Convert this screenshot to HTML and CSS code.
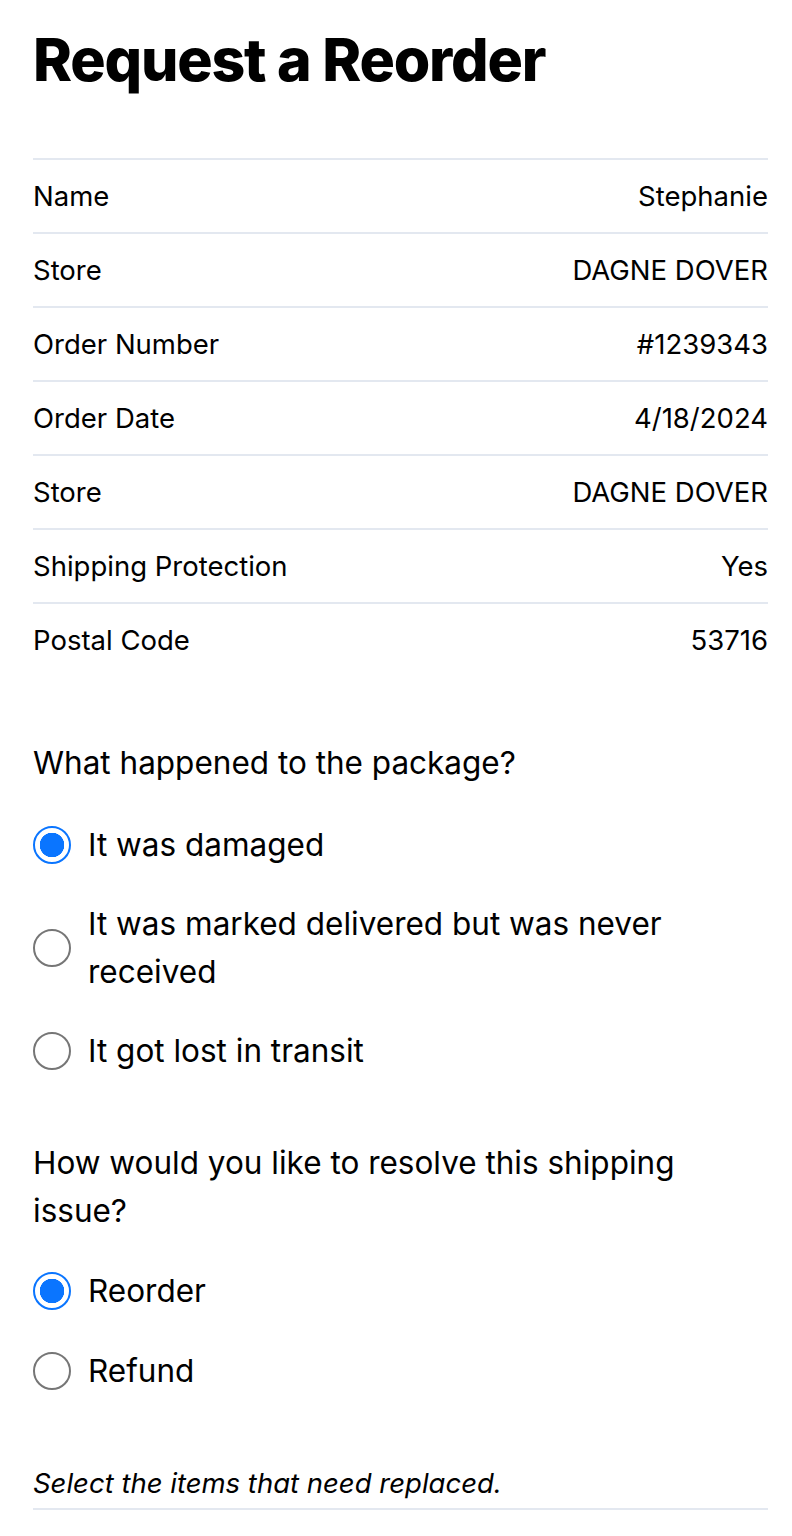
FILE: index.html
```html
<!DOCTYPE html>
<html>
<head>
<meta charset="utf-8">
<link rel="stylesheet" href="styles.css">
</head>
<body>
<main class="page">
  <h1 class="title">Request a Reorder</h1>
  <div class="details">
    <div class="row"><span>Name</span><span>Stephanie</span></div>
    <div class="row"><span>Store</span><span>DAGNE DOVER</span></div>
    <div class="row"><span>Order Number</span><span>#1239343</span></div>
    <div class="row"><span>Order Date</span><span>4/18/2024</span></div>
    <div class="row"><span>Store</span><span>DAGNE DOVER</span></div>
    <div class="row"><span>Shipping Protection</span><span>Yes</span></div>
    <div class="row"><span>Postal Code</span><span>53716</span></div>
  </div>

  <section class="question q1">
    <p class="prompt">What happened to the package?</p>
    <div class="options">
      <label class="option"><span class="radio checked"></span><span class="label">It was damaged</span></label>
      <label class="option"><span class="radio"></span><span class="label">It was marked delivered but was never received</span></label>
      <label class="option"><span class="radio"></span><span class="label">It got lost in transit</span></label>
    </div>
  </section>

  <section class="question q2">
    <p class="prompt">How would you like to resolve this shipping issue?</p>
    <div class="options">
      <label class="option"><span class="radio checked"></span><span class="label">Reorder</span></label>
      <label class="option"><span class="radio"></span><span class="label">Refund</span></label>
    </div>
  </section>

  <p class="note">Select the items that need replaced.</p>
</main>
</body>
</html>
```

FILE: styles.css
```css
* { box-sizing: border-box; }
html, body { margin: 0; padding: 0; background: #fff; }
body {
  font-family: Inter, "Noto Sans", sans-serif;
  color: #000;
}
.page {
  padding: 22px 24px 0 33px;
}
.title {
  margin: 0;
  font-size: 59px;
  font-weight: 800;
  line-height: 76px;
  letter-spacing: -1.2px;
}
.details {
  margin-top: 60px;
}
.row {
  display: flex;
  justify-content: space-between;
  align-items: center;
  height: 74px;
  border-top: 2px solid #e3e8f0;
  font-size: 27.5px;
}
.question { margin-top: 63px; }
.q2 { margin-top: 64px; }
.prompt {
  margin: 0;
  font-size: 31.5px;
  line-height: 48px;
}
.options {
  display: flex;
  flex-direction: column;
  gap: 31px;
  margin-top: 34px;
}
.q2 .options { margin-top: 32px; gap: 32px; }
.option {
  display: flex;
  align-items: center;
  gap: 17px;
  font-size: 31.5px;
  line-height: 48px;
}
.label { flex: 1; padding-right: 80px; }
.radio {
  flex: none;
  width: 38px;
  height: 38px;
  border-radius: 50%;
  border: 2px solid #767676;
  background: #fff;
}
.radio.checked {
  border: 2px solid #0a75ff;
  background: radial-gradient(circle, #0a75ff 0 12px, #fff 12.5px);
}
.note {
  margin: 68px 0 0;
  font-size: 27.5px;
  font-style: italic;
  line-height: 40px;
  padding-bottom: 5px;
  border-bottom: 2px solid #e3e8f0;
}
```
